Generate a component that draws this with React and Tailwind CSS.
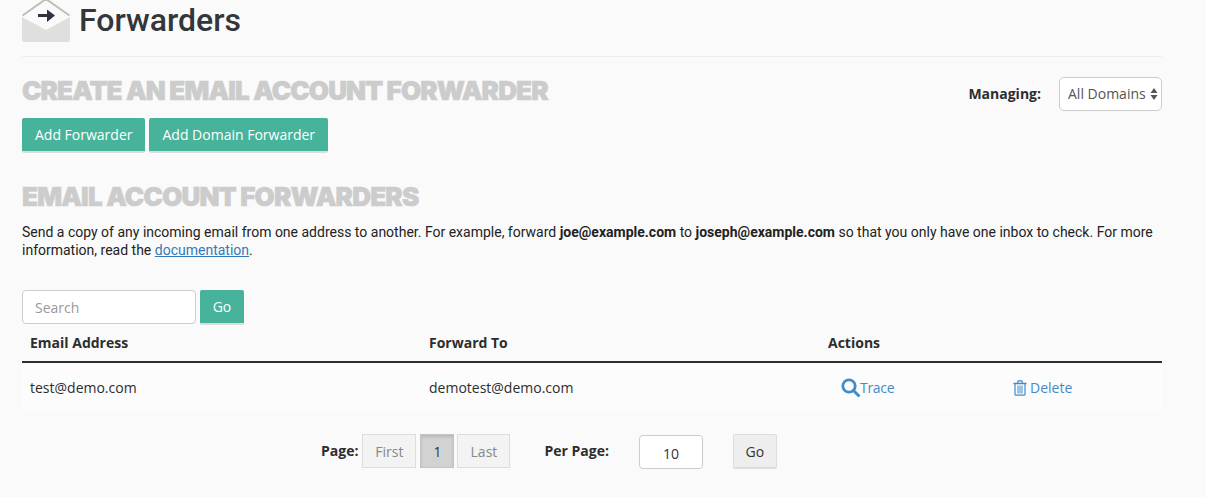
import React from "react";

const ForwarderIcon = () => (
  <svg width="48" height="44" viewBox="0 0 48 44" className="shrink-0">
    <path d="M0 19 L24 32 L48 19 V42 a2 2 0 0 1 -2 2 H2 a2 2 0 0 1 -2 -2 Z" fill="#dfdfdf" />
    <path d="M0.500 17.500 L24 1 L47.500 17.500" fill="none" stroke="#bdbdbd" strokeWidth="2" />
    <path d="M16 17.500 H28" stroke="#2b3540" strokeWidth="3" />
    <path d="M25 11.500 L33 17.500 L25 24 Z" fill="#2b3540" />
  </svg>
);

const TraceIcon = () => (
  <svg width="19" height="19" viewBox="0 0 19 19" className="shrink-0">
    <circle cx="8" cy="8" r="6.200" fill="none" stroke="#428bca" strokeWidth="2.800" />
    <path d="M12.500 12.500 L17.500 17.500" stroke="#428bca" strokeWidth="3" strokeLinecap="round" />
  </svg>
);

const TrashIcon = () => (
  <svg width="14" height="16" viewBox="0 0 14 16" className="shrink-0">
    <path d="M0.500 3.500 H13.500" stroke="#428bca" strokeWidth="1.500" />
    <path d="M4.500 3 L5.200 0.800 H8.800 L9.500 3" fill="none" stroke="#428bca" strokeWidth="1.200" />
    <path d="M2 4 V14.200 A1 1 0 0 0 3 15.200 H11 A1 1 0 0 0 12 14.200 V4" fill="none" stroke="#428bca" strokeWidth="1.200" />
    <path d="M5 5.500 V13.500 M7 5.500 V13.500 M9 5.500 V13.500" stroke="#428bca" strokeWidth="1" />
  </svg>
);

export default function App() {
  return (
    <div className="h-[497px] w-[1206px] overflow-hidden bg-[#fafafa] pl-[22px] font-['Open_Sans',sans-serif] text-[#2d2d2d]">
      <div className="w-[1140px]">
        <header className="flex h-[57px] items-start gap-[9px] border-b border-[#eeeeee]">
          <div className="-mt-[2px]">
            <ForwarderIcon />
          </div>
          <h1 className="font-['Roboto',sans-serif] text-[32px] leading-[40px] font-medium text-[#33363a]">Forwarders</h1>
        </header>

        <div className="mt-[20px] flex items-start justify-between">
          <div>
            <h2 className="mt-[1px] font-['Inter',sans-serif] text-[26px] leading-[26px] font-black tracking-[-0.85px] text-[#cccccc] uppercase [-webkit-text-stroke:0.6px_#cccccc]">
              Create an Email Account Forwarder
            </h2>
            <div className="mt-[14px] flex gap-[4px]">
              <button className="h-[35px] rounded-[2px] border-b-[2px] border-[#dcdcdc] bg-[#46b39a] pr-[12px] pl-[13px] text-[14px] text-white">
                Add Forwarder
              </button>
              <button className="h-[35px] rounded-[2px] border-b-[2px] border-[#dcdcdc] bg-[#46b39a] pr-[13px] pl-[14px] text-[14px] text-white">
                Add Domain Forwarder
              </button>
            </div>
          </div>
          <div className="flex items-center">
            <span className="pb-[2px] text-[14px] font-bold text-[#2d2d2d]">Managing:</span>
            <div className="ml-[18px] flex h-[34px] w-[103px] items-center justify-between rounded-[5px] border border-[#cccccc] bg-white pr-[3px] pl-[8px] text-[14px] text-[#555555]">
              <span className="pb-[2px]">All Domains</span>
              <svg width="8" height="12" viewBox="0 0 8 12">
                <path d="M4 0 L7.500 5 H0.500 Z M4 12 L7.500 7 H0.500 Z" fill="#555555" />
              </svg>
            </div>
          </div>
        </div>

        <h2 className="mt-[31px] font-['Inter',sans-serif] text-[26px] leading-[26px] font-black tracking-[-0.78px] text-[#cccccc] uppercase [-webkit-text-stroke:0.6px_#cccccc]">
          Email Account Forwarders
        </h2>
        <p className="mt-[13px] font-['Roboto',sans-serif] text-[14px] leading-[18px] text-[#222222]">
          Send a copy of any incoming email from one address to another. For example, forward <b>joe@example.com</b> to{" "}
          <b>joseph@example.com</b> so that you only have one inbox to check. For more information, read the{" "}
          <a className="text-[#337ab7] underline">documentation</a>.
        </p>

        <div className="mt-[31px] flex gap-[4px]">
          <div className="flex h-[34px] w-[174px] items-center rounded-[4px] border border-[#cccccc] bg-white px-[12px] text-[14px] text-[#999999]">
            Search
          </div>
          <button className="h-[35px] w-[44px] rounded-[2px] border-b-[2px] border-[#dcdcdc] bg-[#46b39a] text-[14px] text-white">
            Go
          </button>
        </div>

        <table className="mt-[1px] w-full table-fixed border-collapse text-[14px]">
          <thead>
            <tr className="h-[36px] border-b-[2px] border-[#2d2d2d] text-left font-bold">
              <th className="w-[399px] pb-[2px] pl-[8px]">Email Address</th>
              <th className="w-[399px] pb-[2px] pl-[8px]">Forward To</th>
              <th className="w-[185px] pb-[2px] pl-[8px]">Actions</th>
              <th />
            </tr>
          </thead>
          <tbody>
            <tr className="h-[50px] bg-[#fcfcfc]">
              <td className="pl-[8px]">test@demo.com</td>
              <td className="pl-[8px]">demotest@demo.com</td>
              <td className="pl-[21px]">
                <a className="flex items-center tracking-[-0.3px] text-[#428bca]">
                  <TraceIcon />
                  Trace
                </a>
              </td>
              <td className="pl-[8px]">
                <a className="flex items-center gap-[3px] text-[#428bca]">
                  <TrashIcon />
                  Delete
                </a>
              </td>
            </tr>
          </tbody>
        </table>

        <div className="mt-[22px] flex items-start pl-[299px] text-[14px]">
          <span className="mt-[6px] mr-[4px] font-bold">Page:</span>
          <div className="flex">
            <span className="flex h-[34px] w-[54px] items-center justify-center border border-[#dddddd] bg-[#f3f3f3] text-[#888888]">First</span>
            <span className="ml-[4px] flex h-[34px] w-[34px] items-center justify-center border border-[#c4c4c4] bg-[#d2d2d2] text-[#333333] shadow-[inset_0_2px_3px_rgba(0,0,0,0.12)]">1</span>
            <span className="ml-[3px] flex h-[34px] w-[53px] items-center justify-center border border-[#dddddd] bg-[#f3f3f3] text-[#888888]">Last</span>
          </div>
          <span className="mt-[6px] ml-[34px] font-bold">Per Page:</span>
          <div className="mt-[1px] ml-[30px] flex h-[34px] w-[64px] items-center justify-center rounded-[4px] border border-[#cccccc] bg-white pt-[2px] text-[#333333]">
            10
          </div>
          <button className="ml-[30px] h-[35px] w-[44px] rounded-[2px] border border-b-[2px] border-[#dddddd] bg-[#eeeeee] text-[#333333]">
            Go
          </button>
        </div>
      </div>
    </div>
  );
}
